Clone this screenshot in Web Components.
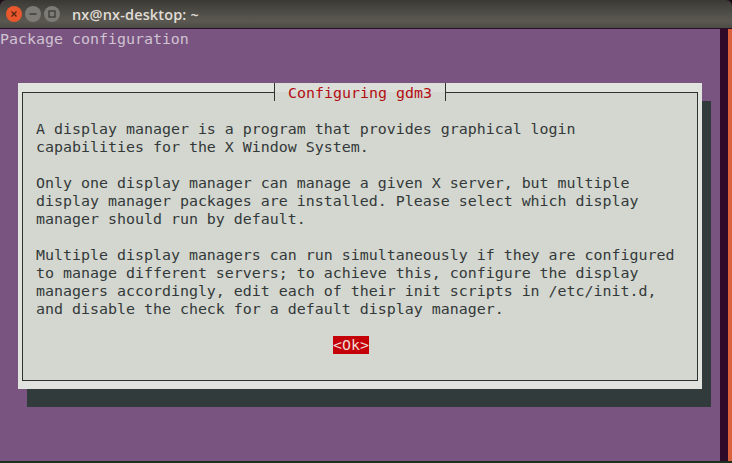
<!DOCTYPE html>
<html>
<head>
<meta charset="utf-8">
<title>nx@nx-desktop: ~</title>
<style>
  html, body { margin: 0; height: 100%; background: #2c0a24; overflow: hidden; }
</style>
</head>
<body>
<term-window heading="nx@nx-desktop: ~">
  <term-screen caption="Package configuration">
    <term-dialog heading="Configuring gdm3" action="Ok">
      <p>A display manager is a program that provides graphical login
capabilities for the X Window System.</p>
      <p>Only one display manager can manage a given X server, but multiple
display manager packages are installed. Please select which display
manager should run by default.</p>
      <p>Multiple display managers can run simultaneously if they are configured
to manage different servers; to achieve this, configure the display
managers accordingly, edit each of their init scripts in /etc/init.d,
and disable the check for a default display manager.</p>
    </term-dialog>
  </term-screen>
</term-window>

<script>
class TermWindow extends HTMLElement {
  connectedCallback() {
    this.attachShadow({ mode: 'open' });
    this.shadowRoot.innerHTML = `
      <style>
        :host { display: flex; flex-direction: column; width: 732px; height: 463px; background: #1c0a18; }
        .bar {
          display: flex;
          align-items: center;
          height: 28px;
          padding-left: 6px;
          flex: none;
          border-radius: 6px 6px 0 0;
          border-bottom: 1px solid #2a1026;
          background: linear-gradient(#3a3935 0%, #4e4d47 45%, #5a5851 75%, #4c4b45 100%);
        }
        .btn { width: 16px; height: 16px; margin-right: 3px; }
        .title {
          margin-left: 9px;
          font: 600 14.5px "Open Sans", sans-serif;
          letter-spacing: 0.15px;
          color: #e0ddd5;
        }
        .body { display: flex; flex: 1; min-height: 0; }
        .edge { width: 4px; flex: none; background: #d9623c; }
        .gutter { width: 8px; flex: none; background: #2f0a29; }
        .foot { height: 2px; flex: none; background: #20301f; }
        ::slotted(*) { flex: 1; }
      </style>
      <div class="bar">
        <svg class="btn" viewBox="0 0 16 16">
          <circle cx="8" cy="8" r="8" fill="#e9572c"/>
          <path d="M5.5 5.5l5 5M10.5 5.5l-5 5" stroke="#5a2412" stroke-width="1.4"/>
        </svg>
        <svg class="btn" viewBox="0 0 16 16">
          <circle cx="8" cy="8" r="8" fill="#7c7b75"/>
          <path d="M4.5 8h7" stroke="#3c3b37" stroke-width="1.4"/>
        </svg>
        <svg class="btn" viewBox="0 0 16 16">
          <circle cx="8" cy="8" r="8" fill="#7c7b75"/>
          <rect x="5" y="5" width="6" height="6" fill="none" stroke="#3c3b37" stroke-width="1.3"/>
        </svg>
        <span class="title">${this.getAttribute('heading')}</span>
      </div>
      <div class="body">
        <slot></slot>
        <div class="gutter"></div>
        <div class="edge"></div>
      </div>
      <div class="foot"></div>
    `;
  }
}
customElements.define('term-window', TermWindow);

class TermScreen extends HTMLElement {
  connectedCallback() {
    this.attachShadow({ mode: 'open' });
    this.shadowRoot.innerHTML = `
      <style>
        :host {
          display: block;
          background: #795480;
          font: 14.95px/18px "DejaVu Sans Mono", monospace;
        }
        .caption { height: 18px; color: #d0c3d2; white-space: pre; position: relative; top: 1px; }
        .slot { display: block; padding: 36px 0 0 18px; }
      </style>
      <div class="caption">${this.getAttribute('caption')}</div>
      <div class="slot"><slot></slot></div>
    `;
  }
}
customElements.define('term-screen', TermScreen);

class TermDialog extends HTMLElement {
  connectedCallback() {
    const action = this.getAttribute('action');
    this.attachShadow({ mode: 'open' });
    this.shadowRoot.innerHTML = `
      <style>
        :host {
          display: block;
          box-sizing: border-box;
          width: 684px;
          height: 306px;
          padding: 9px 4px 8px 4px;
          background: #e1e3de;
          box-shadow: 9px 18px 0 #323b3c;
        }
        .frame {
          box-sizing: border-box;
          height: 100%;
          background: #d3d7cf;
          border: 1px solid #2d332e;
          border-top: 0;
          display: flex;
          flex-direction: column;
        }
        .head { display: flex; height: 18px; margin: -9px -1px 0 -1px; flex: none; }
        .rule { flex: 1; height: 9px; border-bottom: 1px solid #2d332e; }
        .rule.left { flex: none; width: 252px; }
        .name {
          width: 172px;
          height: 18px;
          line-height: 20px;
          box-sizing: border-box;
          border: solid #2d332e;
          border-width: 0 1px;
          background: linear-gradient(#dcdfd9 50%, #d3d7cf 50%);
          text-align: center;
          color: #b30d12;
          white-space: pre;
        }
        .text { margin-left: 13px; padding-top: 19px; flex: 1; color: #33393a; }
        ::slotted(p) { margin: 0 0 18px; white-space: pre; }
        .actions { display: flex; height: 18px; padding-left: 310px; margin-bottom: 26px; flex: none; }
        .ok { width: 36px; background: #c40008; color: #eedcd5; text-align: center; white-space: pre; }
      </style>
      <div class="frame">
        <div class="head">
          <div class="rule left"></div>
          <div class="name">${this.getAttribute('heading')}</div>
          <div class="rule"></div>
        </div>
        <div class="text"><slot></slot></div>
        <div class="actions"><span class="ok">&lt;${action}&gt;</span></div>
      </div>
    `;
  }
}
customElements.define('term-dialog', TermDialog);
</script>
</body>
</html>
